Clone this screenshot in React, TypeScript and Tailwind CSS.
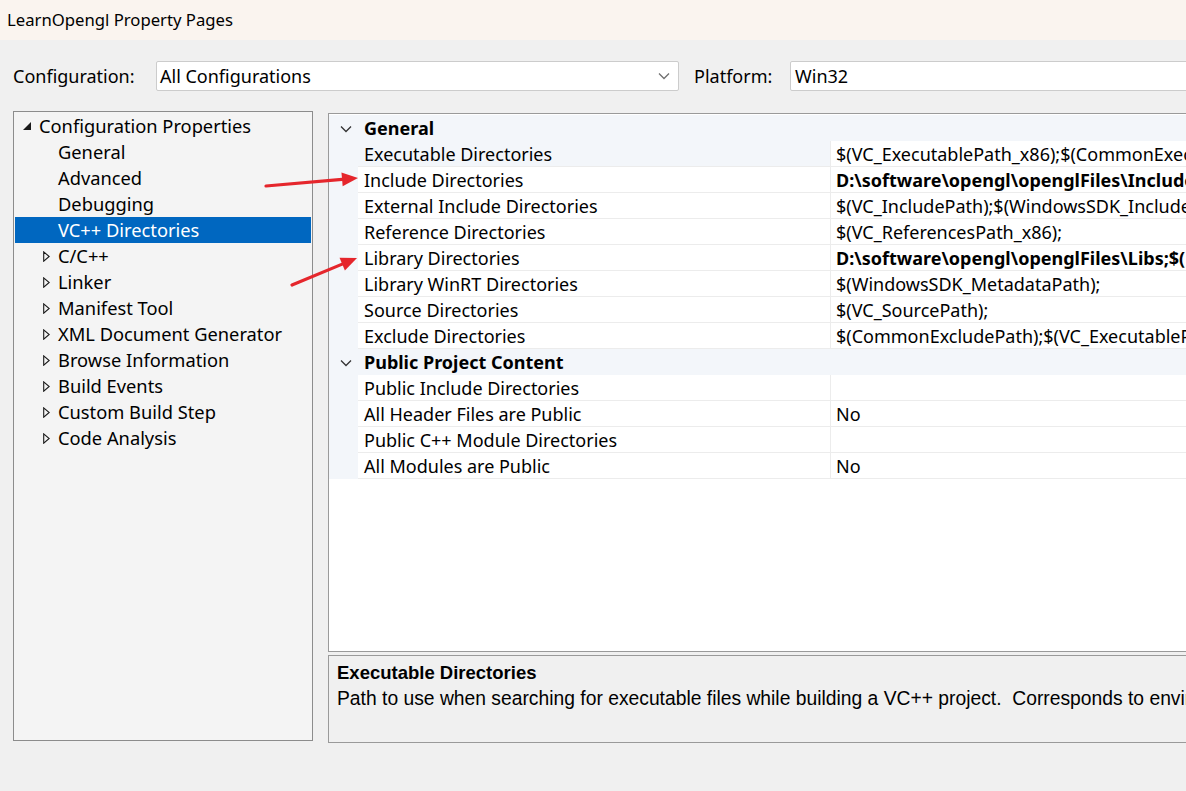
import React from 'react';

const font = { fontFamily: '"Noto Sans", "Open Sans", sans-serif' };

type Prop = { name: string; value?: string; bold?: boolean; active?: boolean };

const groups: { title: string; rows: Prop[] }[] = [
  {
    title: 'General',
    rows: [
      { name: 'Executable Directories', value: '$(VC_ExecutablePath_x86);$(CommonExecutablePath)', active: true },
      { name: 'Include Directories', value: 'D:\\software\\opengl\\openglFiles\\Includes;$(IncludePath)', bold: true },
      { name: 'External Include Directories', value: '$(VC_IncludePath);$(WindowsSDK_IncludePath);' },
      { name: 'Reference Directories', value: '$(VC_ReferencesPath_x86);' },
      { name: 'Library Directories', value: 'D:\\software\\opengl\\openglFiles\\Libs;$(LibraryPath)', bold: true },
      { name: 'Library WinRT Directories', value: '$(WindowsSDK_MetadataPath);' },
      { name: 'Source Directories', value: '$(VC_SourcePath);' },
      { name: 'Exclude Directories', value: '$(CommonExcludePath);$(VC_ExecutablePath_x86);' },
    ],
  },
  {
    title: 'Public Project Content',
    rows: [
      { name: 'Public Include Directories' },
      { name: 'All Header Files are Public', value: 'No' },
      { name: 'Public C++ Module Directories' },
      { name: 'All Modules are Public', value: 'No' },
    ],
  },
];

const treeChildren = ['General', 'Advanced', 'Debugging', 'VC++ Directories'];
const treeCollapsed = [
  'C/C++',
  'Linker',
  'Manifest Tool',
  'XML Document Generator',
  'Browse Information',
  'Build Events',
  'Custom Build Step',
  'Code Analysis',
];

function Chevron({ className }: { className?: string }) {
  return (
    <svg className={className} width="12" height="8" viewBox="0 0 12 8" fill="none">
      <polyline points="1,1.5 6,6.5 11,1.5" stroke="currentColor" strokeWidth="1.3" />
    </svg>
  );
}

function Arrow({ x1, y1, x2, y2 }: { x1: number; y1: number; x2: number; y2: number }) {
  const a = Math.atan2(y2 - y1, x2 - x1);
  const len = 16;
  const w = 7;
  const bx = x2 - len * Math.cos(a);
  const by = y2 - len * Math.sin(a);
  const p1 = `${bx + w * Math.sin(a)},${by - w * Math.cos(a)}`;
  const p2 = `${bx - w * Math.sin(a)},${by + w * Math.cos(a)}`;
  return (
    <g>
      <line x1={x1} y1={y1} x2={bx} y2={by} stroke="#e5262c" strokeWidth="3.2" strokeLinecap="round" />
      <polygon points={`${x2},${y2} ${p1} ${p2}`} fill="#e5262c" />
    </g>
  );
}

export default function App() {
  return (
    <div className="relative w-[1186px] h-[791px] overflow-hidden bg-[#f0f0f0] text-black" style={font}>
      {/* title bar */}
      <div className="h-[40px] bg-[#faf4ef] pl-[7px] flex items-center text-[16.7px]">LearnOpengl Property Pages</div>

      {/* configuration row */}
      <div className="mt-[21px] h-[30px] flex items-center pl-[13px] text-[18px]">
        <span className="w-[143px] shrink-0">Configuration:</span>
        <div className="w-[523px] shrink-0 h-[30px] bg-white border border-[#cccccc] rounded-[2px] flex items-center justify-between pl-[3px] pr-[8px]">
          <span>All Configurations</span>
          <Chevron className="text-[#707070]" />
        </div>
        <span className="ml-[15px] w-[96px] shrink-0">Platform:</span>
        <div className="w-[420px] shrink-0 h-[30px] bg-white border border-[#cccccc] rounded-[2px] flex items-center pl-[4px]">
          Win32
        </div>
      </div>

      {/* main area */}
      <div className="mt-[20px] flex pl-[13px]">
        {/* tree */}
        <div className="w-[300px] h-[630px] shrink-0 border border-[#8c8c8c] bg-[#f4f4f4] pt-[1px] px-[1px] text-[18.3px]">
          <div className="h-[26px] flex items-center">
            <svg className="ml-[7px] mr-[7px]" width="10" height="10" viewBox="0 0 10 10">
              <polygon points="9,1 9,9 1,9" fill="#1a1a1a" />
            </svg>
            <span>Configuration Properties</span>
          </div>
          {treeChildren.map((c) => (
            <div
              key={c}
              className={`h-[26px] flex items-center pl-[43px] ${
                c === 'VC++ Directories' ? 'bg-[#0067c0] text-white' : ''
              }`}
            >
              {c}
            </div>
          ))}
          {treeCollapsed.map((c) => (
            <div key={c} className="h-[26px] flex items-center">
              <svg className="ml-[28px] mr-[8px]" width="7" height="11" viewBox="0 0 7 11">
                <polygon points="0.7,0.8 6.2,5.5 0.7,10.2" fill="none" stroke="#1a1a1a" strokeWidth="1.1" />
              </svg>
              <span>{c}</span>
            </div>
          ))}
        </div>

        {/* right side */}
        <div className="ml-[15px] mt-[2px] w-[900px] shrink-0 flex flex-col">
          <div className="h-[539px] border border-[#9a9a9a] bg-white pt-[1px] text-[18px]">
            {groups.map((g) => (
              <div key={g.title}>
                <div className="h-[26px] flex items-center bg-[#f3f6fa] pt-[1px]">
                  <Chevron className="ml-[11px] mr-[12px] text-[#333]" />
                  <span className="font-bold">{g.title}</span>
                </div>
                {g.rows.map((r) => (
                  <div key={r.name} className="h-[26px] flex bg-[#f3f6fa]">
                    <div className="w-[29px] shrink-0" />
                    <div
                      className={`w-[473px] shrink-0 pl-[6px] pt-[2px] flex items-center border-b border-r border-[#ececec] whitespace-nowrap ${
                        r.active ? 'bg-[#f3f6fa]' : 'bg-white'
                      }`}
                    >
                      {r.name}
                    </div>
                    <div
                      className={`flex-1 min-w-0 pl-[5px] pt-[2px] flex items-center bg-white border-b border-[#ececec] whitespace-nowrap overflow-hidden ${
                        r.bold ? 'font-bold' : ''
                      }`}
                    >
                      {r.value}
                    </div>
                  </div>
                ))}
              </div>
            ))}
          </div>

          <div
            className="mt-[3px] h-[88px] border border-[#9a9a9a] bg-[#f0f0f0] pl-[8px] pt-[4px] whitespace-nowrap overflow-hidden"
            style={{ fontFamily: '"Liberation Sans Narrow", "Liberation Sans", sans-serif' }}
          >
            <div className="font-bold h-[26px] flex items-center text-[18.5px]">Executable Directories</div>
            <div className="h-[26px] flex items-center text-[19.3px]">
              Path to use when searching for executable files while building a VC++ project.&nbsp; Corresponds to environment variable PATH.
            </div>
          </div>
        </div>
      </div>

      {/* annotation arrows */}
      <svg className="absolute left-0 top-0 pointer-events-none" width="1186" height="791">
        <Arrow x1={266} y1={186} x2={358} y2={178} />
        <Arrow x1={292} y1={285} x2={357} y2={258} />
      </svg>
    </div>
  );
}
